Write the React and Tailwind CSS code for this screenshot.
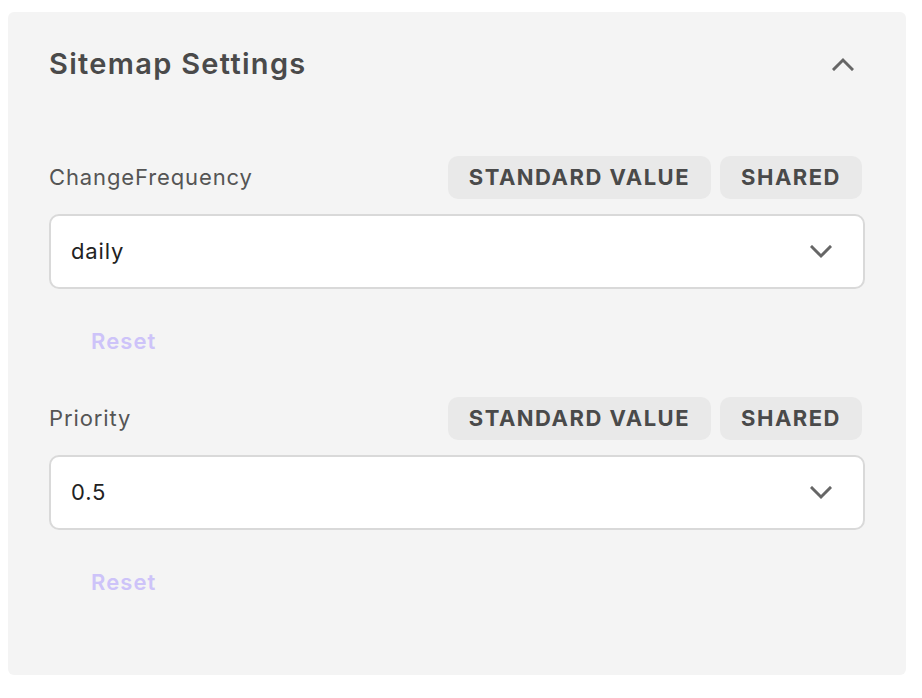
import { useState } from 'react';

const Chevron = ({ up = false }) => (
  <svg width="22" height="14" viewBox="0 0 22 14" fill="none" className="block">
    <polyline
      points={up ? '2,12 11,3 20,12' : '2,2 11,11 20,2'}
      stroke="#666666"
      strokeWidth="3"
      strokeLinecap="square"
    />
  </svg>
);

const Badge = ({ children }) => (
  <span className="flex h-[43px] items-center rounded-[10px] bg-[#e9e9e9] px-[21px] text-[22px] font-bold tracking-[0.068em] text-[#4a4a4a]">
    {children}
  </span>
);

const Field = ({ label, value }) => {
  const [current] = useState(value);

  return (
    <div className="flex flex-col">
      <div className="flex h-[43px] items-center justify-between">
        <span className="text-[22px] tracking-[0.04em] text-[#555555]">{label}</span>
        <div className="mr-[3px] flex gap-[9px]">
          <Badge>STANDARD VALUE</Badge>
          <Badge>SHARED</Badge>
        </div>
      </div>
      <div className="mt-[15px] flex h-[75px] items-center justify-between rounded-[10px] border-2 border-[#d9d9d9] bg-white pl-[20px] pr-[31px]">
        <span className="text-[22px] tracking-[0.04em] text-[#222222]">{current}</span>
        <Chevron />
      </div>
      <div className="mt-[31px] flex h-[43px] items-center">
        <button className="ml-[42px] text-[22px] font-semibold tracking-[0.05em] text-[#cdc3f9]">Reset</button>
      </div>
    </div>
  );
};

export default function App() {
  return (
    <div className="min-h-screen bg-white pt-3 font-['Inter',sans-serif]">
      <div className="mx-2 w-[898px] rounded-[6px] bg-[#f4f4f4] px-[41px] pb-[71px] pt-[30px]">
        <div className="flex h-[43px] items-center justify-between">
          <h2 className="text-[29px] font-semibold tracking-[0.045em] text-[#4a4a4a]">Sitemap Settings</h2>
          <div className="mr-[11px]">
            <Chevron up />
          </div>
        </div>
        <div className="mt-[71px] flex flex-col gap-[34px]">
          <Field label="ChangeFrequency" value="daily" />
          <Field label="Priority" value="0.5" />
        </div>
      </div>
    </div>
  );
}
